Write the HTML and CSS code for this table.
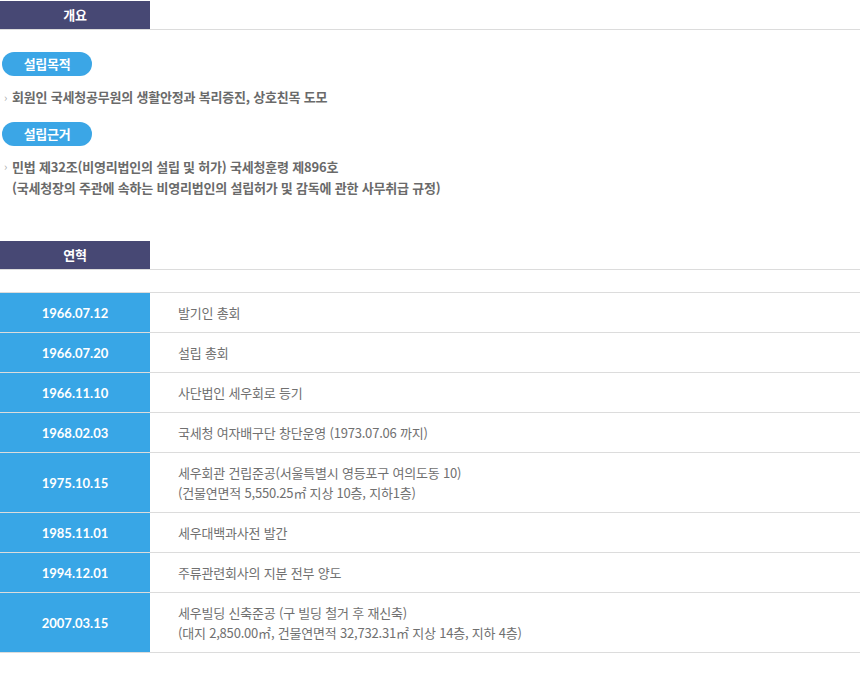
FILE: index.html
```html
<!DOCTYPE html>
<html lang="ko">
<head>
<meta charset="utf-8">
<title>개요 / 연혁</title>
<link rel="stylesheet" href="styles.css">
</head>
<body>
<div class="page">
  <div class="sec-head first"><h2 class="tab">개요</h2></div>

  <div class="pill p1">설립목적</div>
  <ul class="bullets b1">
    <li><span class="arr">›</span><span>회원인 국세청공무원의 생활안정과 복리증진, 상호친목 도모</span></li>
  </ul>

  <div class="pill p2">설립근거</div>
  <ul class="bullets b2">
    <li><span class="arr">›</span><span>민법 제32조(비영리법인의 설립 및 허가) 국세청훈령 제896호<br>(국세청장의 주관에 속하는 비영리법인의 설립허가 및 감독에 관한 사무취급 규정)</span></li>
  </ul>

  <div class="sec-head second"><h2 class="tab">연혁</h2></div>

  <div class="history">
    <div class="row"><div class="date">1966.07.12</div><div class="desc">발기인 총회</div></div>
    <div class="row"><div class="date">1966.07.20</div><div class="desc">설립 총회</div></div>
    <div class="row"><div class="date">1966.11.10</div><div class="desc">사단법인 세우회로 등기</div></div>
    <div class="row"><div class="date">1968.02.03</div><div class="desc">국세청 여자배구단 창단운영 (1973.07.06 까지)</div></div>
    <div class="row"><div class="date">1975.10.15</div><div class="desc">세우회관 건립준공(서울특별시 영등포구 여의도동 10)<br>(건물연면적 5,550.25㎡ 지상 10층, 지하1층)</div></div>
    <div class="row"><div class="date">1985.11.01</div><div class="desc">세우대백과사전 발간</div></div>
    <div class="row"><div class="date">1994.12.01</div><div class="desc">주류관련회사의 지분 전부 양도</div></div>
    <div class="row"><div class="date">2007.03.15</div><div class="desc">세우빌딩 신축준공 (구 빌딩 철거 후 재신축)<br>(대지 2,850.00㎡, 건물연면적 32,732.31㎡ 지상 14층, 지하 4층)</div></div>
  </div>
</div>
</body>
</html>
```
FILE: styles.css
```css
* { box-sizing: border-box; }
html, body { margin: 0; padding: 0; background: #fff; }
body {
  font-family: "Noto Sans CJK KR", "Noto Sans", sans-serif;
  color: #666;
}
.page { width: 860px; }

.sec-head {
  display: flex;
  border-bottom: 1px solid #dcdcdc;
}
.sec-head.first { margin-top: 1px; }
.sec-head.second { margin-top: 43px; }
.tab {
  margin: 0;
  width: 150px;
  height: 28px;
  background: #474874;
  color: #fff;
  font-size: 13px;
  font-weight: 700;
  line-height: 28px;
  text-align: center;
  letter-spacing: -0.3px;
}

.pill {
  margin-left: 2px;
  width: 90px;
  height: 24px;
  border-radius: 12px;
  background: #3ba6e6;
  color: #fff;
  font-size: 13px;
  font-weight: 700;
  line-height: 24px;
  text-align: center;
  letter-spacing: -0.3px;
}
.p1 { margin-top: 22px; }
.p2 { margin-top: 15px; }

.bullets {
  list-style: none;
  margin: 0;
  padding: 0 0 0 4px;
  font-size: 13px;
  font-weight: 700;
  letter-spacing: -0.2px;
  color: #6a6a6a;
}
.bullets li { display: flex; }
.b1 { margin-top: 11px; line-height: 20px; }
.b2 { margin-top: 10px; line-height: 21px; }
.arr {
  width: 8px;
  flex: none;
  font-size: 11px;
  font-weight: 400;
  color: #aaa;
}

.history {
  margin-top: 22px;
  border-bottom: 1px solid #dcdcdc;
}
.row {
  display: grid;
  grid-template-columns: 150px 1fr;
  border-top: 1px solid #dcdcdc;
  min-height: 40px;
}
.date {
  background: #38a6e6;
  color: #fff;
  font-family: "Lato", "Noto Sans", sans-serif;
  font-weight: 700;
  font-size: 13px;
  display: flex;
  align-items: center;
  justify-content: center;
}
.desc {
  padding: 9.5px 0 9.5px 28px;
  font-size: 13px;
  letter-spacing: -0.2px;
  line-height: 20px;
  color: #707070;
  display: flex;
  align-items: center;
}
```
